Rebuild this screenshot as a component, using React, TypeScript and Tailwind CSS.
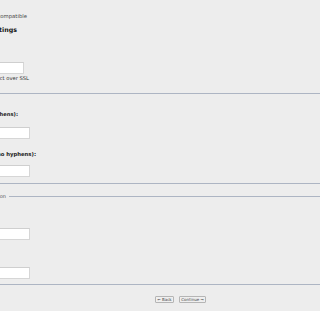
import React from "react";

function Tail({ right, children, className = "" }: { right: number; children: React.ReactNode; className?: string }) {
  return (
    <div
      className={"whitespace-nowrap text-right -ml-[300px] " + className}
      style={{ width: 300 + right }}
    >
      {children}
    </div>
  );
}

function Field({ right }: { right: number }) {
  return (
    <div
      className="h-[12px] bg-white border border-[#d6d6d6] border-t-[#cfcfcf] -ml-[300px]"
      style={{ width: 300 + right }}
    />
  );
}

export default function App() {
  return (
    <div className="w-[320px] h-[320px] bg-white overflow-hidden font-['DejaVu_Sans',sans-serif] text-[#222]">
      <div className="h-[311px] bg-[#ededed] flex flex-col">
        <div className="mt-[12px] text-[5.3px] leading-[8px] text-[#444]">
          <Tail right={27}>Must be IMAP compatible</Tail>
        </div>
        <div className="mt-[4px] text-[6.3px] leading-[11px] font-bold text-[#111]">
          <Tail right={17}>Server Settings</Tail>
        </div>
        <div className="mt-[27px]">
          <Field right={24} />
        </div>
        <div className="mt-[0px] text-[5.2px] leading-[8px] text-[#333]">
          <Tail right={29}>Connect over SSL</Tail>
        </div>
        <div className="mt-[11px] h-px bg-[#adb5c3]" />
        <div className="mt-[16px] text-[5.2px] leading-[8px] font-bold text-[#222]">
          <Tail right={18}>Key (with hyphens):</Tail>
        </div>
        <div className="mt-[9px]">
          <Field right={30} />
        </div>
        <div className="mt-[11px] text-[5.3px] leading-[8px] font-bold text-[#222]">
          <Tail right={36}>Key (no hyphens):</Tail>
        </div>
        <div className="mt-[7px]">
          <Field right={30} />
        </div>
        <div className="mt-[6px] h-px bg-[#adb5c3]" />
        <div className="mt-[8px] flex items-center h-[8px]">
          <div className="text-[5px] leading-[8px] text-[#555]">
            <Tail right={6}>Registration</Tail>
          </div>
          <div className="ml-[3px] flex-1 h-px bg-[#adb5c3]" />
        </div>
        <div className="mt-[28px]">
          <Field right={30} />
        </div>
        <div className="mt-[27px]">
          <Field right={30} />
        </div>
        <div className="mt-[5px] h-px bg-[#adb5c3]" />
        <div className="mt-[11px] ml-[155px] flex gap-[5px]">
          <button className="h-[7px] w-[19px] border border-[#b5b5b5] bg-[#efefef] rounded-[1px] text-[4px] leading-[5px] text-[#444] flex items-center justify-center">
            ← Back
          </button>
          <button className="h-[7px] w-[27px] border border-[#b5b5b5] bg-[#efefef] rounded-[1px] text-[4px] leading-[5px] text-[#444] flex items-center justify-center">
            Continue →
          </button>
        </div>
      </div>
    </div>
  );
}
